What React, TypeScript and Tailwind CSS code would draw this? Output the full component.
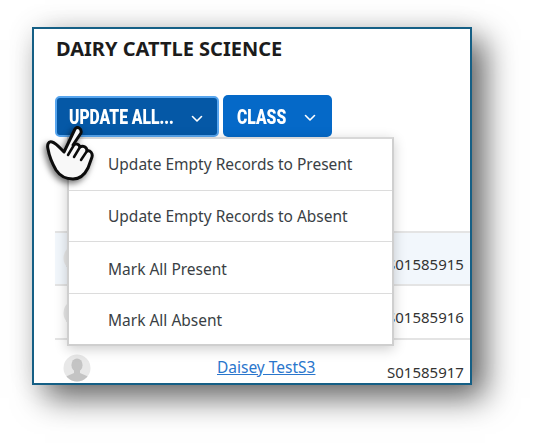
import React from "react";

const font = { fontFamily: '"Noto Sans", sans-serif' };

function Chevron() {
  return (
    <svg className="mt-[4px]" width="12" height="8" viewBox="0 0 12 8" fill="none" stroke="#fff" strokeWidth="1.6" strokeLinecap="round" strokeLinejoin="round">
      <path d="M1.500 1.500 6 6l4.500-4.500" />
    </svg>
  );
}

function Avatar({ uid }: { uid: string }) {
  return (
    <svg width="28" height="28" viewBox="0 0 28 28">
      <circle cx="14" cy="14" r="13.500" fill="#e8e8e8" />
      <clipPath id={uid}><circle cx="14" cy="14" r="13.500" /></clipPath>
      <g clipPath={`url(#${uid})`} fill="#c4c4c4">
        <ellipse cx="14" cy="11" rx="5.600" ry="6.600" />
        <path d="M11 16h6v3l8 3.500c2 1 2.500 3 2.500 5.500h-27c0-2.500.5-4.500 2.500-5.500L11 19z" />
      </g>
    </svg>
  );
}

function Row({ id, tint, link, border, h, top, idTop, uid }: { id: string; tint?: boolean; link?: string; border?: boolean; h: string; top: string; idTop: string; uid: string }) {
  return (
    <div className={`${h} flex items-start ${tint ? "bg-[#f2f7fc]" : "bg-white"} ${border ? "border-b-2 border-[#e4e4e4]" : ""}`}>
      <div className={`ml-[8px] ${top} w-[28px] h-[28px] shrink-0`}><Avatar uid={uid} /></div>
      <div className="flex-1 pl-[126px] mt-[15px]">
        {link && <a className="text-[15.5px] leading-[22px] text-[#2a76cc] underline whitespace-nowrap">{link}</a>}
      </div>
      <div className={`w-[83px] ${idTop} text-[15px] leading-[20px] text-[#333]`}>{id}</div>
    </div>
  );
}

function MenuItem({ children, h, border }: { children: React.ReactNode; h: string; border?: boolean }) {
  return (
    <div className={`${h} flex items-center pl-[39px] text-[15.5px] text-[#3a3f45] whitespace-nowrap ${border ? "border-b border-[#dcdcdc]" : ""}`}>
      {children}
    </div>
  );
}

function BtnText({ children }: { children: React.ReactNode }) {
  return <span className="inline-block origin-left scale-x-[0.87] scale-y-[1.08] whitespace-nowrap">{children}</span>;
}

export default function App() {
  return (
    <div className="w-[536px] h-[448px] bg-white overflow-hidden pt-[27px] pl-[32px]" style={font}>
      <div className="relative w-[440px] h-[358px] bg-white border-2 border-[#155f85] shadow-[13px_13px_30px_rgba(0,0,0,0.6),0_0_30px_rgba(0,0,0,0.06)]">
        <div className="h-full overflow-hidden pt-[7px] pl-[22px]">
          <h1 className="text-[20px] leading-[26px] font-bold text-[#1c1c1c] whitespace-nowrap">DAIRY CATTLE SCIENCE</h1>
          <div className="flex gap-[4px] mt-[33px] items-end" style={{ fontFamily: 'Roboto, sans-serif' }}>
            <button className="h-[41px] w-[164px] -ml-[1px] rounded-[5px] bg-[#0558a6] border-2 border-[#57a5ee] flex items-center pl-[12px] pr-[14px] justify-between text-white font-black text-[18px]">
              <BtnText>UPDATE ALL...</BtnText><Chevron />
            </button>
            <button className="h-[42px] w-[109px] rounded-[5px] bg-[#0569c8] flex items-center pl-[14px] pr-[16px] justify-between text-white font-black text-[18px]">
              <BtnText>CLASS</BtnText><Chevron />
            </button>
          </div>
          <div className="mt-[94px] -ml-[1px] border-t-2 border-[#e4e4e4]">
            <Row uid="a1" h="h-[53px]" top="mt-[11px]" idTop="mt-[21px]" id="S01585915" tint border />
            <Row uid="a2" h="h-[54px]" top="mt-[13px]" idTop="mt-[21px]" id="S01585916" border />
            <Row uid="a3" h="h-[54px]" top="mt-[14px]" idTop="mt-[22px]" id="S01585917" link="Daisey TestS3" />
          </div>
        </div>

        <div className="absolute left-[33px] top-[108px] w-[327px] h-[209px] bg-white border-2 border-[#cfcfcf] border-t-[#d8d8d8] shadow-[0_3px_12px_rgba(0,0,0,0.2)]">
          <MenuItem h="h-[52px]" border>Update Empty Records to Present</MenuItem>
          <MenuItem h="h-[51px] pt-[2px]" border>Update Empty Records to Absent</MenuItem>
          <MenuItem h="h-[52px] pt-[4px]" border>Mark All Present</MenuItem>
          <MenuItem h="h-[50px] pt-[4px]">Mark All Absent</MenuItem>
        </div>

        <svg className="absolute left-[10px] top-[96px]" width="52" height="62" viewBox="0 0 52 62" style={{ filter: "drop-shadow(-2px 3px 3px rgba(0,0,0,0.55))" }}>
          <path
            d="M31 4 20 27C16 23 12 18 8 17 4 16 3 20 4 24 5 30 8 38 12 45 16 51 22 54 29 54 37 54 41 49 44 43L48 32C49 28 46 25 43 26 43 22 39 20 36 22 35 19 32 18 29 20L37 8C38 3 33 1 31 4Z"
            fill="#f8f8f8" stroke="#0c0c0c" strokeWidth="3" strokeLinejoin="round"
          />
          <path d="M30 20 24 30M36 22 30 32M43 26 37 35" fill="none" stroke="#0c0c0c" strokeWidth="2.500" strokeLinecap="round" />
        </svg>
      </div>
    </div>
  );
}
